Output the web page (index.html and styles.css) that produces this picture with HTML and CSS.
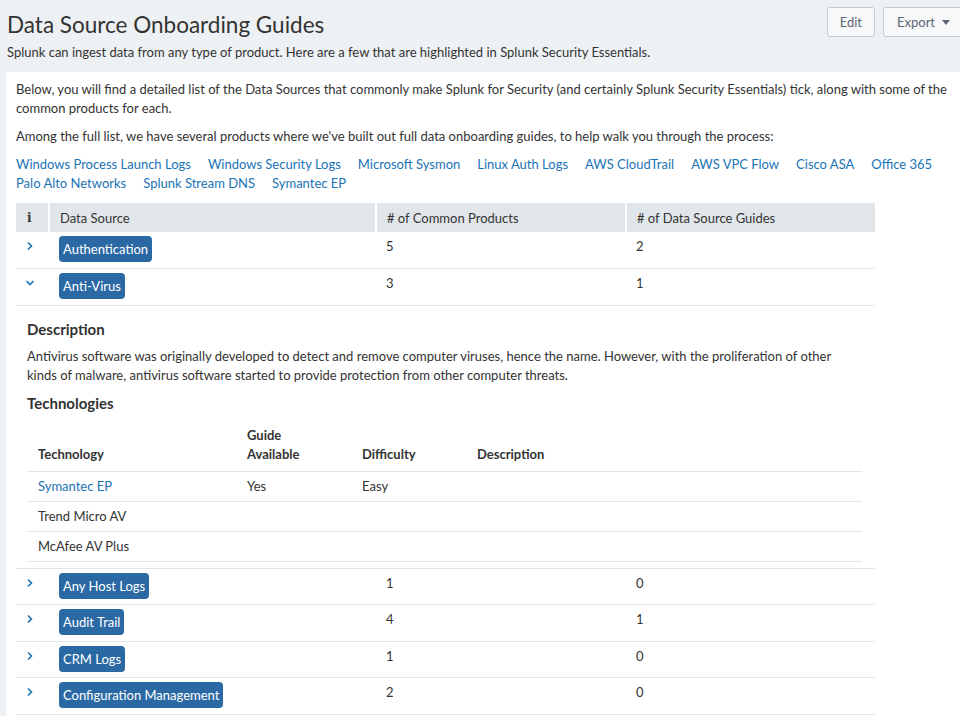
FILE: index.html
```html
<!DOCTYPE html>
<html lang="en">
<head>
<meta charset="utf-8">
<title>Data Source Onboarding Guides</title>
<link rel="stylesheet" href="styles.css">
</head>
<body>
<header class="page-header">
  <div class="titles">
    <h1 class="title">Data Source Onboarding Guides</h1>
    <p class="subtitle">Splunk can ingest data from any type of product. Here are a few that are highlighted in Splunk Security Essentials.</p>
  </div>
  <div class="actions">
    <button class="btn">Edit</button>
    <button class="btn btn-export">Export <span class="caret"></span></button>
  </div>
</header>
<main class="panel">
  <p class="para">Below, you will find a detailed list of the Data Sources that commonly make Splunk for Security (and certainly Splunk Security Essentials) tick, along with some of the common products for each.</p>
  <p class="para">Among the full list, we have several products where we've built out full data onboarding guides, to help walk you through the process:</p>
  <div class="links">
    <a href="#">Windows Process Launch Logs</a>
    <a href="#">Windows Security Logs</a>
    <a href="#">Microsoft Sysmon</a>
    <a href="#">Linux Auth Logs</a>
    <a href="#">AWS CloudTrail</a>
    <a href="#">AWS VPC Flow</a>
    <a href="#">Cisco ASA</a>
    <a href="#">Office 365</a>
    <a href="#">Palo Alto Networks</a>
    <a href="#">Splunk Stream DNS</a>
    <a href="#">Symantec EP</a>
  </div>
  <table class="ds-table">
    <colgroup>
      <col class="c-i"><col class="c-ds"><col class="c-cp"><col class="c-g">
    </colgroup>
    <thead>
      <tr>
        <th class="th-i">i</th>
        <th>Data Source</th>
        <th># of Common Products</th>
        <th># of Data Source Guides</th>
      </tr>
    </thead>
    <tbody>
      <tr class="row">
        <td class="chev"><svg viewBox="0 0 10 10" width="10" height="10"><path d="M3 1.5 L6.5 5 L3 8.5" fill="none" stroke="#1a73b5" stroke-width="1.6"/></svg></td>
        <td><span class="badge">Authentication</span></td>
        <td>5</td>
        <td>2</td>
      </tr>
      <tr class="row">
        <td class="chev"><svg viewBox="0 0 10 10" width="10" height="10"><path d="M1.5 3 L5 6.5 L8.5 3" fill="none" stroke="#1a73b5" stroke-width="1.6"/></svg></td>
        <td><span class="badge">Anti-Virus</span></td>
        <td>3</td>
        <td>1</td>
      </tr>
      <tr class="detail">
        <td colspan="4">
          <div class="detail-body">
            <h3 class="dh">Description</h3>
            <p class="dtext">Antivirus software was originally developed to detect and remove computer viruses, hence the name. However, with the proliferation of other kinds of malware, antivirus software started to provide protection from other computer threats.</p>
            <h3 class="dh">Technologies</h3>
            <table class="tech">
              <colgroup><col class="t1"><col class="t2"><col class="t3"><col class="t4"></colgroup>
              <thead>
                <tr><th>Technology</th><th>Guide<br>Available</th><th>Difficulty</th><th>Description</th></tr>
              </thead>
              <tbody>
                <tr><td><a href="#">Symantec EP</a></td><td>Yes</td><td>Easy</td><td></td></tr>
                <tr><td>Trend Micro AV</td><td></td><td></td><td></td></tr>
                <tr><td>McAfee AV Plus</td><td></td><td></td><td></td></tr>
              </tbody>
            </table>
          </div>
        </td>
      </tr>
      <tr class="row">
        <td class="chev"><svg viewBox="0 0 10 10" width="10" height="10"><path d="M3 1.5 L6.5 5 L3 8.5" fill="none" stroke="#1a73b5" stroke-width="1.6"/></svg></td>
        <td><span class="badge">Any Host Logs</span></td>
        <td>1</td>
        <td>0</td>
      </tr>
      <tr class="row">
        <td class="chev"><svg viewBox="0 0 10 10" width="10" height="10"><path d="M3 1.5 L6.5 5 L3 8.5" fill="none" stroke="#1a73b5" stroke-width="1.6"/></svg></td>
        <td><span class="badge">Audit Trail</span></td>
        <td>4</td>
        <td>1</td>
      </tr>
      <tr class="row">
        <td class="chev"><svg viewBox="0 0 10 10" width="10" height="10"><path d="M3 1.5 L6.5 5 L3 8.5" fill="none" stroke="#1a73b5" stroke-width="1.6"/></svg></td>
        <td><span class="badge">CRM Logs</span></td>
        <td>1</td>
        <td>0</td>
      </tr>
      <tr class="row">
        <td class="chev"><svg viewBox="0 0 10 10" width="10" height="10"><path d="M3 1.5 L6.5 5 L3 8.5" fill="none" stroke="#1a73b5" stroke-width="1.6"/></svg></td>
        <td><span class="badge">Configuration Management</span></td>
        <td>2</td>
        <td>0</td>
      </tr>
    </tbody>
  </table>
</main>
</body>
</html>
```
FILE: styles.css
```css
* { box-sizing: border-box; }
html, body { margin: 0; padding: 0; }
body {
  background: #eef1f3;
  font-family: Lato, "Open Sans", "Liberation Sans", sans-serif;
  font-size: 13px;
  color: #333;
  overflow: hidden;
  height: 716px;
}
.page-header {
  display: flex;
  justify-content: space-between;
  align-items: flex-start;
  padding: 7px 0 0 7px;
  height: 72px;
}
.title {
  margin: 4px 0 0 0;
  font-size: 22.5px;
  font-weight: 400;
  line-height: 28px;
  color: #333;
}
.subtitle {
  margin: 4px 0 0 0;
  font-size: 13px;
  line-height: 18px;
}
.actions {
  display: flex;
  gap: 8px;
  margin-right: -6px;
}
.btn {
  height: 30px;
  padding: 0 12px;
  background: #f7f8fa;
  border: 1px solid #c3cbd4;
  border-radius: 3px;
  font-family: inherit;
  font-size: 13px;
  color: #5c6773;
}
.btn-export { width: 83px; text-align: left; padding-left: 13px; }
.caret {
  display: inline-block;
  width: 0; height: 0;
  border-left: 4px solid transparent;
  border-right: 4px solid transparent;
  border-top: 5px solid #5c6773;
  margin-left: 4px;
  vertical-align: 2px;
}
.panel {
  background: #fff;
  margin-left: 6px;
  padding: 8px 10px 0 10px;
  height: 644px;
}
.para {
  margin: 0 0 9px 0;
  line-height: 19px;
}
.links {
  display: flex;
  flex-wrap: wrap;
  column-gap: 17px;
  line-height: 19px;
  margin-bottom: 10px;
}
.links a, .tech a {
  color: #1a73b5;
  text-decoration: none;
}
.ds-table {
  width: 859px;
  border-collapse: collapse;
  table-layout: fixed;
}
.c-i { width: 33px; }
.c-ds { width: 327px; }
.c-cp { width: 250px; }
.c-g { width: 249px; }
.ds-table > thead th {
  background: #e1e6eb;
  font-weight: 400;
  text-align: left;
  height: 29px;
  padding: 0 10px;
  border-left: 2px solid #fff;
}
.ds-table > thead th:first-child { border-left: 0; }
.ds-table > thead th.th-i {
  font-family: "DejaVu Serif", serif;
  font-weight: 700;
  font-size: 12px;
  text-align: left;
  padding: 0 0 0 11px;
}
.row td {
  vertical-align: top;
  height: 36.5px;
  padding: 6px 10px 0 10px;
  border-bottom: 1px solid #e1e6eb;
  line-height: 17px;
}
.row td.chev { padding: 6px 0 0 9px; }
.row td:nth-child(2) { padding: 4px 10px 0 10px; }
.badge {
  display: inline-block;
  background: #2b69a5;
  color: #fff;
  border-radius: 4px;
  padding: 4px 4px;
  line-height: 18px;
  font-size: 13px;
}
.detail > td {
  padding: 0 0 6px 11px;
  border-bottom: 1px solid #e1e6eb;
}
.dh {
  margin: 0;
  font-size: 15px;
  font-weight: 700;
  line-height: 20px;
}
.detail-body { padding-top: 13px; }
.dh + .dtext { margin-top: 8px; }
.dtext {
  margin: 0 0 8px 0;
  line-height: 19px;
  max-width: 815px;
}
.tech {
  width: 835px;
  border-collapse: collapse;
  table-layout: fixed;
  margin-top: 13px;
}
.t1 { width: 209px; }
.t2 { width: 115px; }
.t3 { width: 115px; }
.t4 { width: 396px; }
.tech th {
  text-align: left;
  font-weight: 700;
  font-size: 13px;
  vertical-align: bottom;
  line-height: 19px;
  padding: 0 11px 7px 11px;
  border-bottom: 1px solid #e1e6eb;
}
.tech td {
  height: 30px;
  padding: 0 11px;
  border-bottom: 1px solid #e1e6eb;
  line-height: 19px;
}
```
